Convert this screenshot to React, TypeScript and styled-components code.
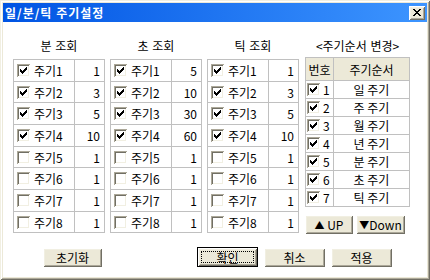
import React from 'react'
import styled, { createGlobalStyle } from 'styled-components'

const GlobalStyle = createGlobalStyle`
  html, body {
    margin: 0;
    padding: 0;
    background: #fff;
  }
  body {
    font-family: "Noto Sans CJK KR", "Noto Sans", sans-serif;
    font-size: 12px;
    color: #000;
  }
`

const raised = `
  box-shadow: inset 1px 1px #fff, inset -1px -1px #716f64,
    inset 2px 2px #f1efe2, inset -2px -2px #aca899;
`

const Window = styled.div`
  box-sizing: border-box;
  width: 430px;
  height: 280px;
  padding: 3px;
  background: #ece9d8;
  box-shadow: inset 1px 1px #f1efe2, inset -1px -1px #716f64,
    inset 2px 2px #fff, inset -2px -2px #aca899;
  display: flex;
  flex-direction: column;
`

const TitleBar = styled.div`
  height: 19px;
  flex: none;
  display: flex;
  align-items: center;
  justify-content: space-between;
  padding: 0 2px 0 2px;
  background: linear-gradient(to right, #0054e3, #3d95ff);
`

const Title = styled.span`
  color: #fff;
  font-weight: bold;
  font-size: 12px;
  line-height: 19px;
  letter-spacing: 1px;
`

const CloseButton = styled.div`
  width: 16px;
  height: 14px;
  background: #ece9d8;
  ${raised}
  display: flex;
`

const Body = styled.div`
  flex: 1;
  background: #fff;
  padding: 14px 10px 0;
  display: flex;
  flex-direction: column;
`

const Columns = styled.div`
  display: flex;
  align-items: flex-start;
`

const Column = styled.div<{ $width: number; $ml: number }>`
  width: ${p => p.$width}px;
  margin-left: ${p => p.$ml}px;
  display: flex;
  flex-direction: column;
`

const ColumnLabel = styled.div`
  height: 20px;
  line-height: 20px;
  text-align: center;
  white-space: pre;
  word-spacing: 1px;
`

const Grid = styled.div<{ $cols: string; $mt: number }>`
  display: grid;
  grid-template-columns: ${p => p.$cols};
  margin-top: ${p => p.$mt}px;
  border-top: 1px solid #c0c0c0;
  border-left: 1px solid #c0c0c0;
`

const Cell = styled.div<{ $h: number; $justify?: string; $pl?: number; $pr?: number }>`
  box-sizing: border-box;
  height: ${p => p.$h}px;
  border-right: 1px solid #c0c0c0;
  border-bottom: 1px solid #c0c0c0;
  display: flex;
  align-items: center;
  justify-content: ${p => p.$justify || 'flex-start'};
  padding-left: ${p => p.$pl ?? 0}px;
  padding-right: ${p => p.$pr ?? 0}px;
  white-space: pre;
`

const HeadCell = styled(Cell)`
  background: #ece9d8;
  justify-content: center;
`

const Box = styled.span<{ $gap: number }>`
  width: 13px;
  height: 13px;
  flex: none;
  margin-right: ${p => p.$gap}px;
  background: #fff;
  box-shadow: inset 1px 1px #aca899, inset -1px -1px #fff,
    inset 2px 2px #716f64, inset -2px -2px #f1efe2;
  display: flex;
`

const Button = styled.div<{ $width: number; $ml?: number; $default?: boolean }>`
  box-sizing: border-box;
  position: relative;
  width: ${p => p.$width}px;
  height: ${p => (p.$default ? 20 : 19)}px;
  margin-left: ${p => p.$ml ?? 0}px;
  margin-top: ${p => (p.$default ? -1 : 0)}px;
  background: #ece9d8;
  border: ${p => (p.$default ? '1px solid #000' : 'none')};
  ${raised}
  display: flex;
  align-items: center;
  justify-content: center;
  white-space: pre;
  ${p =>
    p.$default &&
    `&::after {
      content: '';
      position: absolute;
      inset: 3px;
      border: 1px dotted #000;
    }`}
`

const Arrow = styled.span`
  font-size: 10px;
`

const ButtonRow = styled.div<{ $mt: number; $gap: number }>`
  display: flex;
  align-items: flex-start;
  gap: ${p => p.$gap}px;
  margin-top: ${p => p.$mt}px;
`

const Check = ({ on, gap }: { on: boolean; gap: number }) => (
  <Box $gap={gap}>
    {on && (
      <svg width="13" height="13" viewBox="0 0 13 13" shapeRendering="crispEdges">
        <path
          d="M3 5h1v3H3z M4 6h1v3H4z M5 7h1v3H5z M6 6h1v3H6z M7 5h1v3H7z M8 4h1v3H8z M9 3h1v3H9z"
          fill="#000"
        />
      </svg>
    )}
  </Box>
)

const rowHeights = [22, 21, 22, 22, 21, 22, 22, 21]

const PeriodTable = ({ title, values }: { title: string; values: number[] }) => (
  <Column $width={92} $ml={title === '분 조회' ? 0 : 5}>
    <ColumnLabel>{title}</ColumnLabel>
    <Grid $cols="61px 30px" $mt={3}>
      {values.map((v, i) => (
        <React.Fragment key={i}>
          <Cell $h={rowHeights[i]} $pl={3}>
            <Check on={i < 4} gap={4} />
            {`주기${i + 1}`}
          </Cell>
          <Cell $h={rowHeights[i]} $justify="flex-end" $pr={4}>
            {v}
          </Cell>
        </React.Fragment>
      ))}
    </Grid>
  </Column>
)

const orders = ['일 주기', '주 주기', '월 주기', '년 주기', '분 주기', '초 주기', '틱 주기']

export default function App() {
  return (
    <>
      <GlobalStyle />
      <Window>
        <TitleBar>
          <Title>일/분/틱 주기설정</Title>
          <CloseButton>
            <svg width="16" height="14" viewBox="0 0 16 14" shapeRendering="crispEdges">
              <path
                d="M4 3h2v1H4z M10 3h2v1h-2z M5 4h2v1H5z M9 4h2v1H9z M6 5h4v1H6z M7 6h2v1H7z M6 7h4v1H6z M5 8h2v1H5z M9 8h2v1H9z M4 9h2v1H4z M10 9h2v1h-2z"
                fill="#000"
              />
            </svg>
          </CloseButton>
        </TitleBar>
        <Body>
          <Columns>
            <PeriodTable title="분 조회" values={[1, 3, 5, 10, 1, 1, 1, 1]} />
            <PeriodTable title="초 조회" values={[5, 10, 30, 60, 1, 1, 1, 1]} />
            <PeriodTable title="틱 조회" values={[1, 3, 5, 10, 1, 1, 1, 1]} />
            <Column $width={105} $ml={6}>
              <ColumnLabel>{'<주기순서 변경>'}</ColumnLabel>
              <Grid $cols="28px 76px" $mt={1}>
                <HeadCell $h={23}>번호</HeadCell>
                <HeadCell $h={23}>주기순서</HeadCell>
                {orders.map((o, i) => (
                  <React.Fragment key={o}>
                    <Cell $h={18} $pl={1}>
                      <Check on gap={3} />
                      {i + 1}
                    </Cell>
                    <Cell $h={18} $justify="center">
                      {o}
                    </Cell>
                  </React.Fragment>
                ))}
              </Grid>
              <ButtonRow $mt={8} $gap={3}>
                <Button $width={48}>
                  <Arrow>▲</Arrow> UP
                </Button>
                <Button $width={49}>
                  <Arrow>▼</Arrow>Down
                </Button>
              </ButtonRow>
            </Column>
          </Columns>
          <ButtonRow $mt={14} $gap={6}>
            <Button $width={59} $ml={30}>초기화</Button>
            <Button $width={61} $ml={89} $default>확인</Button>
            <Button $width={61}>취소</Button>
            <Button $width={61}>적용</Button>
          </ButtonRow>
        </Body>
      </Window>
    </>
  )
}
